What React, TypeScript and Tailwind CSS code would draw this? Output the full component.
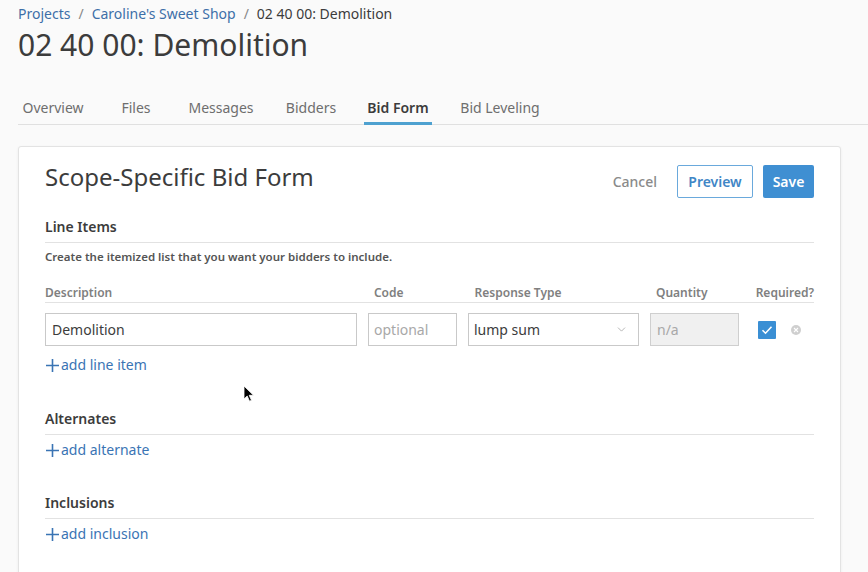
import { ChevronDown } from "lucide-react"

const tabs = [
  { label: "Overview", w: "w-[72px]", ml: "-ml-[1px]" },
  { label: "Files", w: "w-[40px]", ml: "ml-[27px]" },
  { label: "Messages", w: "w-[74px]", ml: "ml-[28px]" },
  { label: "Bidders", w: "w-[60px]", ml: "ml-[23px]" },
  { label: "Bid Form", w: "w-[68px]", ml: "ml-[23px]" },
  { label: "Bid Leveling", w: "w-[90px]", ml: "ml-[23px]" },
]

function AddLink({ label }: { label: string }) {
  return (
    <div className="flex h-[20px] items-center text-[14px] leading-[20px] text-[#3a74b4]">
      <svg width="15" height="15" viewBox="0 0 15 15" className="mr-[1px]">
        <path d="M7.5 1v13M1 7.5h13" stroke="currentColor" strokeWidth="1.6" fill="none" />
      </svg>
      {label}
    </div>
  )
}

function Section({ title, children }: { title: string; children: React.ReactNode }) {
  return (
    <div>
      <div className="border-b border-[#e2e2e2] pb-[5px] text-[14px] font-semibold leading-[20px] text-[#3c3c3c]">
        {title}
      </div>
      {children}
    </div>
  )
}

export default function App() {
  return (
    <div
      className="relative h-[572px] w-[868px] overflow-hidden bg-[#fafafa] pl-[18px] text-[#3c3c3c]"
      style={{ fontFamily: '"Noto Sans", "Open Sans", sans-serif' }}
    >
      <div className="flex h-[24px] items-end text-[14px] leading-[20px]">
        <span className="text-[#3d6fa8]">Projects</span>
        <span className="mx-[8px] text-[#888]">/</span>
        <span className="text-[#3d6fa8]">Caroline's Sweet Shop</span>
        <span className="mx-[8px] text-[#888]">/</span>
        <span className="text-[#3c3c3c]">02 40 00: Demolition</span>
      </div>
      <h1 className="mt-[3px] h-[36px] text-[30px] font-normal leading-[36px] text-[#3c3c3c]">
        02 40 00: Demolition
      </h1>

      <div className="mt-[29px] flex border-b border-[#e0e0e0]">
        {tabs.map((tab) => (
          <div
            key={tab.label}
            className={
              tab.label === "Bid Form"
                ? `${tab.w} ${tab.ml} -mb-px h-[33px] whitespace-nowrap border-b-[3px] border-[#4ea1d0] pt-[6px] text-center text-[14px] font-semibold leading-[20px] text-[#3c3c3c]`
                : `${tab.w} ${tab.ml} -mb-px h-[33px] whitespace-nowrap pt-[6px] text-center text-[14px] leading-[20px] text-[#6e6e6e]`
            }
          >
            {tab.label}
          </div>
        ))}
      </div>

      <div className="mr-[27px] mt-[21px] h-[500px] rounded-[3px] border border-[#e3e3e3] bg-white px-[26px] shadow-[0_1px_3px_rgba(0,0,0,0.06)]">
        <div className="flex items-start justify-between">
          <h2 className="pt-[14px] text-[24px] font-normal leading-[32px] text-[#3c3c3c]">
            Scope-Specific Bid Form
          </h2>
          <div className="flex items-center pt-[18px]">
            <span className="mr-[20px] text-[14px] font-medium text-[#8a8a8a]">Cancel</span>
            <div className="flex h-[33px] w-[76px] items-center justify-center rounded-[2px] border border-[#6aa9dc] bg-white text-[14px] font-semibold text-[#3f86c6]">
              Preview
            </div>
            <div className="ml-[10px] flex h-[33px] w-[51px] items-center justify-center rounded-[2px] bg-[#3f8fd2] text-[14px] font-semibold text-white">
              Save
            </div>
          </div>
        </div>

        <div className="mt-[19px]">
          <Section title="Line Items">
            <div className="mt-[6px] text-[11.5px] font-semibold leading-[16px] text-[#555]">
              Create the itemized list that you want your bidders to include.
            </div>
            <div className="mt-[20px] flex border-b border-[#e2e2e2] pb-[1px] text-[12px] font-semibold leading-[16px] text-[#808080]">
              <div className="w-[323px]">Description</div>
              <div className="w-[100px] pl-[7px]">Code</div>
              <div className="w-[182px] pl-[8px]">Response Type</div>
              <div className="w-[108px] pl-[8px]">Quantity</div>
              <div>Required?</div>
            </div>
            <div className="mt-[10px] flex items-center">
              <div className="flex h-[33px] w-[312px] items-center border border-[#c9c9c9] bg-white px-[6px] text-[14px]">
                Demolition
              </div>
              <div className="ml-[11px] flex h-[33px] w-[89px] items-center border border-[#c9c9c9] bg-white px-[5px] text-[14px] text-[#a8a8a8]">
                optional
              </div>
              <div className="ml-[11px] flex h-[33px] w-[171px] items-center justify-between border border-[#c9c9c9] bg-white pl-[5px] pr-[10px] text-[14px]">
                lump sum
                <ChevronDown size={13} strokeWidth={1.3} className="text-[#999]" />
              </div>
              <div className="ml-[11px] flex h-[33px] w-[89px] items-center border border-[#cfcfcf] bg-[#f0f0f0] px-[6px] text-[14px] text-[#a8a8a8]">
                n/a
              </div>
              <div className="ml-[19px] flex h-[18px] w-[18px] items-center justify-center rounded-[1px] bg-[#3a8fd4]">
                <svg width="12" height="10" viewBox="0 0 12 10">
                  <path d="M1.5 5.2l3 3L10.5 1.8" stroke="white" strokeWidth="1.6" fill="none" />
                </svg>
              </div>
              <div className="ml-[15px] flex h-[10px] w-[10px] items-center justify-center rounded-full bg-[#cfcfcf]">
                <svg width="6" height="6" viewBox="0 0 6 6">
                  <path d="M1 1l4 4M5 1L1 5" stroke="white" strokeWidth="1.1" />
                </svg>
              </div>
            </div>
            <div className="mt-[9px]">
              <AddLink label="add line item" />
            </div>
          </Section>

          <div className="mt-[34px]">
            <Section title="Alternates">
              <div className="mt-[5px]">
                <AddLink label="add alternate" />
              </div>
            </Section>
          </div>

          <div className="mt-[33px]">
            <Section title="Inclusions">
              <div className="mt-[5px]">
                <AddLink label="add inclusion" />
              </div>
            </Section>
          </div>
        </div>
      </div>

      <svg className="absolute left-[243px] top-[385px]" width="12" height="18" viewBox="0 0 12 18">
        <path d="M1 1v13l3.2-3 2.3 5.2 2-0.9-2.3-5H10.5z" fill="black" stroke="white" strokeWidth="0.8" />
      </svg>
    </div>
  )
}
